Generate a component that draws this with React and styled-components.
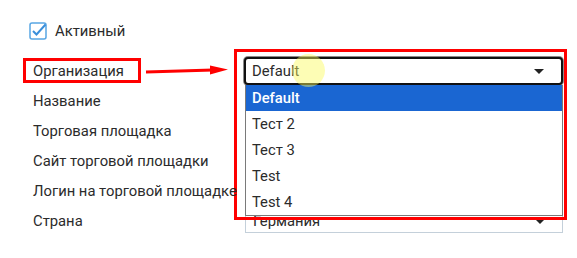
import React from 'react'
import styled, {createGlobalStyle} from 'styled-components'

const GlobalStyle = createGlobalStyle`
    body {
        margin: 0;
        background: #fff;
        font-family: Roboto, "Noto Sans", sans-serif;
        font-size: 14.8px;
        color: #2b2b2b;
    }
`

const Page = styled.div`
    position: relative;
    width: 577px;
    height: 258px;
    padding: 22px 0 0 29px;
    box-sizing: border-box;
`

const CheckRow = styled.label`
    display: flex;
    align-items: center;
    gap: 8px;
    height: 17px;
`

const Form = styled.div`
    display: grid;
    grid-template-columns: 215px 319px;
    grid-auto-rows: 30px;
    margin-top: 17px;
`

const Label = styled.div`
    display: flex;
    align-items: center;
    padding-left: 4px;
    white-space: nowrap;
    position: relative;
    z-index: 5;
`

const LabelMark = styled.div`
    position: absolute;
    left: -6px;
    top: 2px;
    width: 118px;
    height: 25px;
    border: 3px solid #f00;
    box-sizing: border-box;
    pointer-events: none;
`

const Cell = styled.div`
    display: flex;
    align-items: center;
    position: relative;
`

const Select = styled.div`
    flex: 1;
    display: flex;
    align-items: center;
    justify-content: space-between;
    box-sizing: border-box;
    height: ${p => (p.$open ? '28px' : '23px')};
    margin-left: ${p => (p.$open ? '0' : '1px')};
    padding: 0 17px 0 ${p => (p.$open ? '6px' : '7px')};
    border: ${p => (p.$open ? '2px solid #111' : '1px solid #c4d0da')};
    border-radius: ${p => (p.$open ? '4px' : '0')};
    box-shadow: ${p => (p.$open ? '0 0 0 1px #8a8a8a' : 'none')};
    background: #fff;
`

const Caret = styled.span`
    width: 0;
    height: 0;
    border-left: 5px solid transparent;
    border-right: 5px solid transparent;
    border-top: 5px solid #222;
`

const List = styled.ul`
    position: absolute;
    top: 29px;
    left: 1px;
    width: 318px;
    margin: 0;
    padding: 0;
    list-style: none;
    box-sizing: border-box;
    border: 1px solid #7a7a7a;
    border-top: none;
    background: #fff;
    z-index: 2;
`

const Item = styled.li`
    height: 26px;
    display: flex;
    align-items: center;
    padding-left: 6px;
    background: ${p => (p.$active ? '#1a66d2' : '#fff')};
    color: ${p => (p.$active ? '#fff' : '#2b2b2b')};
    font-weight: ${p => (p.$active ? 500 : 400)};
`

const DropMark = styled.div`
    position: absolute;
    left: -10px;
    top: -7px;
    width: 333px;
    height: 171px;
    border: 3px solid #f00;
    box-sizing: border-box;
    z-index: 3;
    pointer-events: none;
`

const Cursor = styled.div`
    position: absolute;
    left: 292px;
    top: 54px;
    width: 33px;
    height: 33px;
    border-radius: 50%;
    background: rgba(250, 250, 90, 0.45);
    z-index: 4;
    pointer-events: none;
`

const Arrow = styled.svg`
    position: absolute;
    left: 145px;
    top: 62px;
    z-index: 4;
`

const CheckIcon = () => (
    <svg width='18' height='18' viewBox='0 0 18 18'>
        <rect x='1' y='1' width='16' height='16' rx='2' fill='#fff' stroke='#58a6e4' strokeWidth='1.5' />
        <path d='M4 9 L7.5 12.5 L16.5 2.5' fill='none' stroke='#3a8fdb' strokeWidth='2' />
    </svg>
)

const options = ['Default', 'Тест 2', 'Тест 3', 'Test', 'Test 4']

const App = () => {
    return (
        <Page>
            <GlobalStyle />
            <CheckRow>
                <CheckIcon />
                Активный
            </CheckRow>

            <Form>
                <Label>
                    Организация
                    <LabelMark />
                </Label>
                <Cell>
                    <Select $open>
                        Default
                        <Caret />
                    </Select>
                    <List>
                        {options.map((o, i) => (
                            <Item key={o} $active={i === 0}>{o}</Item>
                        ))}
                    </List>
                    <DropMark />
                </Cell>

                <Label>Название</Label>
                <Cell><Select /></Cell>

                <Label>Торговая площадка</Label>
                <Cell><Select /></Cell>

                <Label>Сайт торговой площадки</Label>
                <Cell><Select /></Cell>

                <Label>Логин на торговой площадке</Label>
                <Cell><Select /></Cell>

                <Label>Страна</Label>
                <Cell>
                    <Select>
                        Германия
                        <Caret />
                    </Select>
                </Cell>
            </Form>

            <Arrow width='86' height='16' viewBox='0 0 86 16'>
                <path d='M1 10 L68 8' stroke='#f00' strokeWidth='3' />
                <path d='M65 3.5 L83 7.5 L65 12.5 Z' fill='#f00' />
            </Arrow>
            <Cursor />
        </Page>
    )
}

export default App
